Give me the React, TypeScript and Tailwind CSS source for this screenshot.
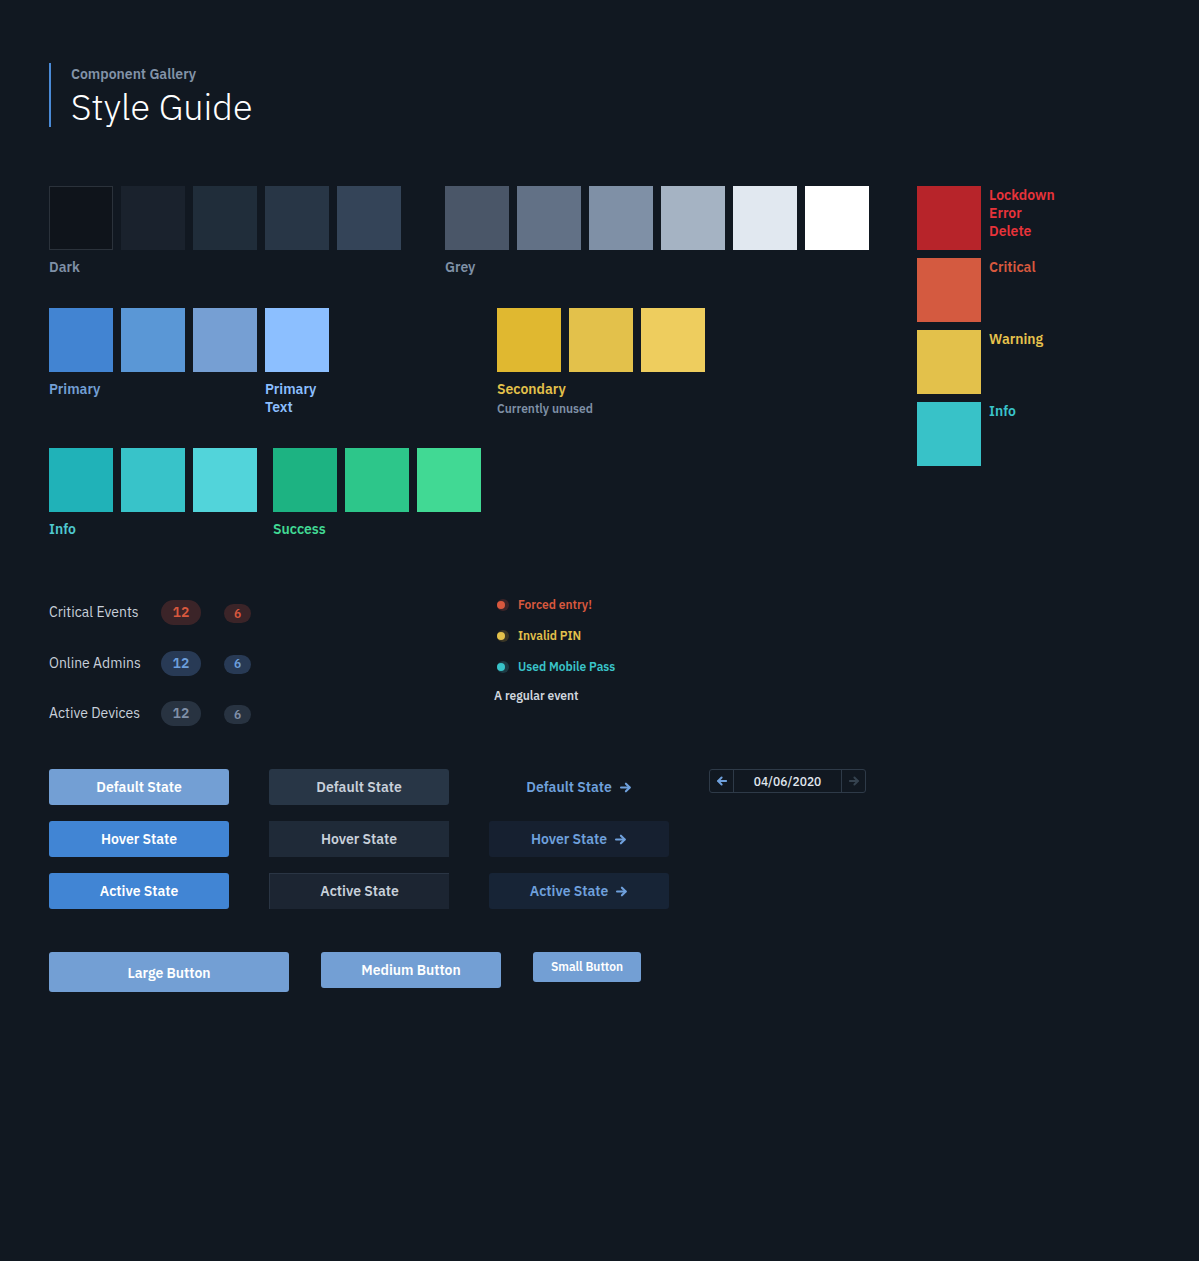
import React from "react";

const font = { fontFamily: '"IBM Plex Sans", Roboto, "Liberation Sans", sans-serif' };

function Sw({ c, cls = "" }: { c: string; cls?: string }) {
  return <div className={`w-16 h-16 ${cls}`} style={{ backgroundColor: c }} />;
}

function Arrow({ className = "", dir = "right" }: { className?: string; dir?: "right" | "left" }) {
  return (
    <svg
      viewBox="0 0 16 16"
      className={className}
      fill="none"
      stroke="currentColor"
      strokeWidth={2.6}
      strokeLinecap="round"
      strokeLinejoin="round"
      style={dir === "left" ? { transform: "scaleX(-1)" } : undefined}
    >
      <path d="M2.5 8h10.5" />
      <path d="M8.5 3.3L13.2 8l-4.7 4.7" />
    </svg>
  );
}

function Badge({ n, big, bg, fg }: { n: string; big?: boolean; bg: string; fg: string }) {
  return big ? (
    <div
      className={`w-10 h-[25px] rounded-full flex items-center justify-center text-[14px] font-semibold ${bg} ${fg}`}
    >
      {n}
    </div>
  ) : (
    <div
      className={`w-[27px] h-[19px] rounded-full flex items-center justify-center text-[12px] font-semibold ${bg} ${fg}`}
    >
      {n}
    </div>
  );
}

function EventRow({ dot, ring, text, color }: { dot: string; ring: string; text: string; color: string }) {
  return (
    <div className="flex items-center h-[14px]">
      <div className={`relative w-[12px] h-[12px] rounded-full ${ring} ml-[3px]`}>
        <div className={`absolute left-0 top-[2px] w-[8px] h-[8px] rounded-full ${dot}`} />
      </div>
      <span className={`ml-[9px] text-[12px] font-semibold ${color}`}>{text}</span>
    </div>
  );
}

export default function App() {
  return (
    <div className="min-h-[1261px] bg-[#111821] pl-[49px] pt-[63px]" style={font}>
      {/* Header */}
      <div className="border-l-2 border-[#4a8ad6] pl-5 h-16 flex flex-col justify-start">
        <div className="text-[14px] font-semibold text-[#8393a8] leading-5 mt-[1px]">Component Gallery</div>
        <div className="text-[36px] font-light text-white leading-[40px] mt-[3px]">Style Guide</div>
      </div>

      <div className="flex mt-[59px]">
        {/* Left content */}
        <div className="w-[868px]">
          {/* Row 1 */}
          <div className="flex gap-[44px]">
            <div>
              <div className="flex gap-2">
                <div className="w-16 h-16 bg-[#0f141b] border border-[#2b323b]" />
                <Sw c="#1a222d" />
                <Sw c="#202d3a" />
                <Sw c="#283646" />
                <Sw c="#344458" />
              </div>
              <div className="mt-[7px] text-[14px] font-semibold leading-5 text-[#7f90a6]">Dark</div>
            </div>
            <div>
              <div className="flex gap-2">
                <Sw c="#4a5668" />
                <Sw c="#627186" />
                <Sw c="#7f90a6" />
                <Sw c="#a5b3c3" />
                <Sw c="#e1e8f0" />
                <Sw c="#ffffff" />
              </div>
              <div className="mt-[7px] text-[14px] font-semibold leading-5 text-[#7f90a6]">Grey</div>
            </div>
          </div>

          {/* Row 2 */}
          <div className="flex gap-[168px] mt-[31px]">
            <div>
              <div className="flex gap-2">
                <Sw c="#4284d2" />
                <Sw c="#5a97d6" />
                <Sw c="#769fd3" />
                <Sw c="#8cbfff" />
              </div>
              <div className="flex mt-2 text-[14px] font-semibold leading-[18px]">
                <div className="w-[216px] text-[#739fd4]">Primary</div>
                <div className="text-[#8cbfff]">
                  Primary
                  <br />
                  Text
                </div>
              </div>
            </div>
            <div>
              <div className="flex gap-2">
                <Sw c="#e0b830" />
                <Sw c="#e3c14b" />
                <Sw c="#eecd5e" />
              </div>
              <div className="mt-2 text-[14px] font-semibold leading-[18px] text-[#e3c14b]">Secondary</div>
              <div className="mt-[2px] text-[12px] font-semibold leading-[18px] text-[#7f90a6]">Currently unused</div>
            </div>
          </div>

          {/* Row 3 */}
          <div className="flex gap-4 mt-[30px]">
            <div>
              <div className="flex gap-2">
                <Sw c="#20b2b8" />
                <Sw c="#38c3c9" />
                <Sw c="#52d4da" />
              </div>
              <div className="mt-[7px] text-[14px] font-semibold leading-5 text-[#4fc9cf]">Info</div>
            </div>
            <div>
              <div className="flex gap-2">
                <Sw c="#1db382" />
                <Sw c="#2dc68a" />
                <Sw c="#41d994" />
              </div>
              <div className="mt-[7px] text-[14px] font-semibold leading-5 text-[#41d994]">Success</div>
            </div>
          </div>

          {/* Badges + events */}
          <div className="flex mt-[58px]">
            <div className="w-[445px] flex flex-col gap-[25.5px] pt-[3px]">
              {[
                { l: "Critical Events", bg: "bg-[#3b2428]", fg: "text-[#d8583e]" },
                { l: "Online Admins", bg: "bg-[#283a55]", fg: "text-[#6d9fdc]" },
                { l: "Active Devices", bg: "bg-[#283341]", fg: "text-[#8090a8]" },
              ].map((r) => (
                <div key={r.l} className="flex items-center h-[25px]">
                  <div className="w-[112px] text-[14px] text-[#c8d0da]">{r.l}</div>
                  <Badge n="12" big bg={r.bg} fg={r.fg} />
                  <div className="ml-[23px] mt-[2px]">
                    <Badge n="6" bg={r.bg} fg={r.fg} />
                  </div>
                </div>
              ))}
            </div>
            <div className="flex flex-col gap-[17px] pt-[1px]">
              <EventRow dot="bg-[#d8583e]" ring="bg-[#3b2428]" text="Forced entry!" color="text-[#d8583e]" />
              <EventRow dot="bg-[#e3c14b]" ring="bg-[#3a3626]" text="Invalid PIN" color="text-[#e3c14b]" />
              <EventRow dot="bg-[#38c3c9]" ring="bg-[#1d3a44]" text="Used Mobile Pass" color="text-[#3ac4ca]" />
              <div className="text-[12px] font-semibold text-[#d0d6de] h-[14px] leading-[14px] -mt-[2px]">A regular event</div>
            </div>
          </div>

          {/* State buttons */}
          <div className="flex gap-10 mt-[43px]">
            <div className="flex flex-col gap-4 w-[180px]">
              <button className="h-9 rounded-[3px] bg-[#739fd4] text-white text-[14px] font-semibold">Default State</button>
              <button className="h-9 rounded-[3px] bg-[#4185d4] text-white text-[14px] font-semibold">Hover State</button>
              <button className="h-9 rounded-[3px] bg-[#4185d4] text-white text-[14px] font-semibold">Active State</button>
            </div>
            <div className="flex flex-col gap-4 w-[180px]">
              <button className="h-9 rounded-[3px] bg-[#283646] text-[#c8d0da] text-[14px] font-semibold">Default State</button>
              <button className="h-9 bg-[#1f2a38] text-[#c8d0da] text-[14px] font-semibold">Hover State</button>
              <button className="h-9 bg-[#1c2532] border-l border-t border-[#2a3544] text-[#c8d0da] text-[14px] font-semibold">Active State</button>
            </div>
            <div className="flex flex-col gap-4 w-[180px]">
              <button className="h-9 rounded-[3px] text-[#6fa0dc] text-[14px] font-semibold flex items-center justify-center gap-[7px]">
                Default State <Arrow className="w-[13px] h-[13px]" />
              </button>
              <button className="h-9 rounded-[3px] bg-[#162030] text-[#6fa0dc] text-[14px] font-semibold flex items-center justify-center gap-[7px]">
                Hover State <Arrow className="w-[13px] h-[13px]" />
              </button>
              <button className="h-9 rounded-[3px] bg-[#172436] text-[#6fa0dc] text-[14px] font-semibold flex items-center justify-center gap-[7px]">
                Active State <Arrow className="w-[13px] h-[13px]" />
              </button>
            </div>
            <div>
              <div className="flex h-6 w-[157px] border border-[#2e3a48] rounded-[3px]">
                <div className="w-6 flex items-center justify-center border-r border-[#2e3a48] text-[#6fa0dc]">
                  <Arrow dir="left" className="w-[12px] h-[12px]" />
                </div>
                <div className="flex-1 flex items-center justify-center text-[12px] font-medium text-[#e1e8f0] pt-[1px]">04/06/2020</div>
                <div className="w-6 flex items-center justify-center border-l border-[#2e3a48] text-[#35424f]">
                  <Arrow className="w-[12px] h-[12px]" />
                </div>
              </div>
            </div>
          </div>

          {/* Size buttons */}
          <div className="flex items-start gap-8 mt-[43px]">
            <button className="w-[240px] h-10 rounded-[3px] bg-[#739fd4] text-white text-[14px] font-semibold pt-[2px]">Large Button</button>
            <button className="w-[180px] h-9 rounded-[3px] bg-[#739fd4] text-white text-[14px] font-semibold">Medium Button</button>
            <button className="w-[108px] h-[30px] rounded-[3px] bg-[#739fd4] text-white text-[12px] font-semibold">Small Button</button>
          </div>
        </div>

        {/* Right column */}
        <div className="flex flex-col gap-2">
          {[
            { c: "#b7242a", t: ["Lockdown", "Error", "Delete"], fg: "text-[#e8333a]" },
            { c: "#d45a40", t: ["Critical"], fg: "text-[#d8583e]" },
            { c: "#e3c14b", t: ["Warning"], fg: "text-[#e7c34d]" },
            { c: "#38c2c8", t: ["Info"], fg: "text-[#3ac4ca]" },
          ].map((r) => (
            <div key={r.c} className="flex gap-2">
              <Sw c={r.c} />
              <div className={`text-[14px] font-semibold leading-[18px] ${r.fg}`}>
                {r.t.map((x) => (
                  <div key={x}>{x}</div>
                ))}
              </div>
            </div>
          ))}
        </div>
      </div>
    </div>
  );
}
